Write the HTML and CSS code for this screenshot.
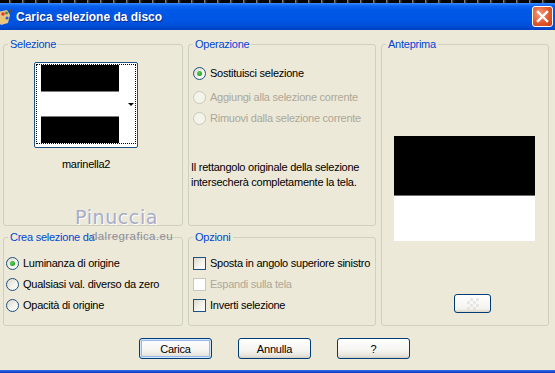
FILE: index.html
```html
<!DOCTYPE html>
<html lang="it">
<head>
    <meta charset="UTF-8">
    <meta name="viewport" content="width=device-width, initial-scale=1.0">
    <title>Carica selezione da disco</title>
    <link rel="stylesheet" href="styles.css">
</head>
<body>
    <div class="window">
        <div class="screen-strip"></div>
        <div class="titlebar">
            <svg class="app-icon" width="12" height="17" viewBox="0 0 12 17">
                <path d="M-2 3 L7 1 L10 6 L8 14 L1 16 L-2 12 Z" fill="#e9c38a"/>
                <circle cx="3" cy="5" r="1.8" fill="#e23a2a"/>
                <circle cx="6.5" cy="4" r="1.5" fill="#2f9c3a"/>
                <circle cx="7" cy="9" r="1.6" fill="#2a5fd8"/>
                <circle cx="3" cy="11" r="1.6" fill="#f2d22a"/>
                <path d="M9 2 L11 0 L12 1 L10 4 Z" fill="#7a4a1c"/>
            </svg>
            <span class="title">Carica selezione da disco</span>
            <span class="close-btn">
                <svg width="13" height="13" viewBox="0 0 13 13">
                    <path d="M2 2 L11 11 M11 2 L2 11" stroke="#fff" stroke-width="2.4" stroke-linecap="square"/>
                </svg>
            </span>
        </div>

        <div class="groups">
            <fieldset class="group group-selection">
                <legend>Selezione</legend>
                <div class="thumb-wrap">
                    <div class="thumb">
                        <div class="thumb-focus">
                            <div class="thumb-img">
                                <div class="bar-black bar-top"></div>
                                <div class="bar-white"></div>
                                <div class="bar-black bar-bottom"></div>
                            </div>
                            <div class="thumb-side"><span class="arrow"></span></div>
                        </div>
                    </div>
                    <div class="thumb-name">marinella2</div>
                </div>
            </fieldset>

            <fieldset class="group group-operation">
                <legend>Operazione</legend>
                <div class="option-list operation-list">
                    <label class="option"><span class="radio checked"></span>Sostituisci selezione</label>
                    <label class="option disabled"><span class="radio"></span>Aggiungi alla selezione corrente</label>
                    <label class="option disabled"><span class="radio"></span>Rimuovi dalla selezione corrente</label>
                </div>
                <p class="note">Il rettangolo originale della selezione<br>intersecherà completamente la tela.</p>
            </fieldset>

            <fieldset class="group group-preview">
                <legend>Anteprima</legend>
                <div class="preview-img">
                    <div class="preview-black"></div>
                    <div class="preview-white"></div>
                </div>
                <span class="bg-btn"><span class="checker"></span></span>
            </fieldset>

            <fieldset class="group group-source">
                <legend>Crea selezione da</legend>
                <div class="option-list">
                    <label class="option"><span class="radio checked"></span>Luminanza di origine</label>
                    <label class="option"><span class="radio"></span>Qualsiasi val. diverso da zero</label>
                    <label class="option"><span class="radio"></span>Opacità di origine</label>
                </div>
            </fieldset>

            <fieldset class="group group-options">
                <legend>Opzioni</legend>
                <div class="option-list">
                    <label class="option"><span class="check"></span>Sposta in angolo superiore sinistro</label>
                    <label class="option disabled"><span class="check"></span>Espandi sulla tela</label>
                    <label class="option"><span class="check"></span>Inverti selezione</label>
                </div>
            </fieldset>
        </div>

        <div class="buttons">
            <button type="button" class="btn btn-default">Carica</button>
            <button type="button" class="btn">Annulla</button>
            <button type="button" class="btn">?</button>
        </div>

        <div class="bottom-strip"></div>

        <div class="watermark">Pinuccia</div>
        <div class="watermark-url">dalregrafica.eu</div>
    </div>
</body>
</html>
```

FILE: styles.css
```css
body {
    margin: 0;
    font-family: 'Liberation Sans', Arial, sans-serif;
    font-size: 11px;
    letter-spacing: -0.25px;
    color: #000;
    background-color: #ece9d8;
}

.window {
    position: relative;
    width: 555px;
    height: 373px;
    overflow: hidden;
    display: flex;
    flex-direction: column;
    background-color: #ece9d8;
}

.screen-strip {
    height: 3px;
    background: repeating-linear-gradient(90deg, #050505 0, #050505 9px, #9a9a9a 9px, #202020 11px, #050505 13px);
}

.titlebar {
    height: 27px;
    display: flex;
    align-items: center;
    position: relative;
    background: linear-gradient(#3d8dff 0, #0a62ee 3px, #0058e6 7px, #0055e3 18px, #004cd6 24px, #0041c0 27px);
}

.app-icon {
    margin-left: 0;
    margin-top: 2px;
}

.title {
    margin-left: 4px;
    color: #fff;
    font-family: 'Liberation Sans', Arial, sans-serif;
    font-weight: bold;
    font-size: 12px;
    letter-spacing: 0;
    text-shadow: 1px 1px 0 #0a2a8a;
}

.close-btn {
    position: absolute;
    right: 2px;
    top: 3px;
    width: 19px;
    height: 19px;
    border: 1px solid #fff;
    border-radius: 3px;
    display: flex;
    align-items: center;
    justify-content: center;
    background: radial-gradient(circle at 35% 35%, #f39a78 0, #e2582e 55%, #c53c12 100%);
}

.groups {
    display: grid;
    grid-template-columns: 180px 188px 168px;
    grid-template-rows: 188px 95px;
    column-gap: 5px;
    row-gap: 5px;
    padding: 8px 0 0 3px;
}

.group {
    margin: 0;
    padding: 0;
    border: 1px solid #d0d0bf;
    border-radius: 3px;
    min-width: 0;
    display: flex;
    flex-direction: column;
}

.group legend {
    margin-left: 4px;
    padding: 0 2px;
    line-height: 13px;
    color: #0046d5;
}

.group-preview {
    grid-column: 3;
    grid-row: 1 / span 2;
    align-items: flex-start;
}

.group-source {
    grid-column: 1;
    grid-row: 2;
}

.group-options {
    grid-column: 2;
    grid-row: 2;
}

/* thumbnail of the saved selection */
.thumb-wrap {
    width: 102px;
    margin: 11px 0 0 31px;
    display: flex;
    flex-direction: column;
    align-items: center;
}

.thumb {
    width: 100px;
    height: 82px;
    border: 1px solid #1c5180;
    border-radius: 2px;
    padding: 1px;
    box-sizing: content-box;
    background: #fff;
}

.thumb-focus {
    box-sizing: border-box;
    height: 80px;
    border: 1px dotted #000;
    display: flex;
    background: #fff;
}

.thumb-img {
    width: 78px;
    margin-left: 4px;
    display: flex;
    flex-direction: column;
}

.bar-black {
    height: 26px;
    background: #000;
}

.bar-top {
    border-bottom: 1px solid #7a7a7a;
}

.bar-bottom {
    border-top: 1px solid #7a7a7a;
}

.bar-white {
    height: 24px;
    background: #fff;
}

.thumb-side {
    flex: 1;
    display: flex;
    align-items: center;
    justify-content: flex-end;
    padding-right: 1px;
}

.arrow {
    width: 0;
    height: 0;
    border-left: 3px solid transparent;
    border-right: 3px solid transparent;
    border-top: 3px solid #000;
}

.thumb-name {
    margin-top: 10px;
    line-height: 13px;
}

/* radio and check rows */
.option-list {
    display: flex;
    flex-direction: column;
    gap: 8px;
    margin-top: 13px;
    padding-left: 2px;
}

.group-options .option-list {
    padding-left: 4px;
}

.operation-list {
    margin-top: 16px;
    padding-left: 4px;
}

.operation-list .option:first-child {
    margin-bottom: 3px;
}

.option {
    display: flex;
    align-items: center;
    gap: 4px;
    height: 13px;
    line-height: 13px;
    white-space: nowrap;
}

.option.disabled {
    color: #aca899;
}

.radio {
    box-sizing: border-box;
    width: 13px;
    height: 13px;
    border: 1px solid #1c5180;
    border-radius: 50%;
    background: linear-gradient(135deg, #dcd9cb 0, #f3f2ec 55%, #fff 100%);
    display: flex;
    align-items: center;
    justify-content: center;
}

.radio.checked::after {
    content: "";
    width: 5px;
    height: 5px;
    border-radius: 50%;
    background: radial-gradient(circle at 40% 40%, #5ed35e, #21a121 70%);
}

.option.disabled .radio {
    border-color: #cac8bb;
    background: #f5f4ea;
}

.check {
    box-sizing: border-box;
    width: 13px;
    height: 13px;
    border: 1px solid #1c5180;
    background: linear-gradient(135deg, #dcd9cb 0, #f3f2ec 55%, #fff 100%);
}

.option.disabled .check {
    border-color: #cac8bb;
    background: #fff;
}

.note {
    margin: 35px 0 0 2px;
    line-height: 15px;
}

/* preview */
.preview-img {
    width: 141px;
    margin: 85px 0 0 12px;
}

.preview-black {
    height: 59px;
    background: #000;
    border-bottom: 1px solid #6e6e6e;
}

.preview-white {
    height: 45px;
    background: #fff;
}

.bg-btn {
    box-sizing: border-box;
    width: 37px;
    height: 19px;
    margin: 53px 0 0 72px;
    border: 1px solid #003c74;
    border-radius: 3px;
    background: linear-gradient(#fff, #f4f3ee 80%, #dcd8cc);
    display: flex;
    align-items: center;
    justify-content: center;
}

.checker {
    width: 12px;
    height: 12px;
    opacity: 0.5;
    background:
        linear-gradient(45deg, #d8d8d8 25%, transparent 25%, transparent 75%, #d8d8d8 75%),
        linear-gradient(45deg, #d8d8d8 25%, transparent 25%, transparent 75%, #d8d8d8 75%);
    background-size: 6px 6px;
    background-position: 0 0, 3px 3px;
}

/* bottom buttons */
.buttons {
    display: flex;
    gap: 26px;
    margin-top: 12px;
    padding-left: 139px;
}

.btn {
    box-sizing: border-box;
    width: 73px;
    height: 21px;
    padding: 0;
    border: 1px solid #003c74;
    border-radius: 3px;
    background: linear-gradient(#fff 0, #f5f4f0 60%, #e8e6de 85%, #d6d0c5 100%);
    font-family: 'Liberation Sans', Arial, sans-serif;
    font-size: 11px;
    letter-spacing: -0.2px;
    color: #000;
}

.btn-default {
    box-shadow: inset 0 0 0 1px #cee7ff, inset 0 0 0 2px #98b8ea;
}

.bottom-strip {
    margin-top: auto;
    height: 3px;
    background: linear-gradient(#3b6ce0, #0835c8);
}

/* watermark over the dialog */
.watermark {
    position: absolute;
    left: 75px;
    top: 206px;
    font-family: 'DejaVu Sans', sans-serif;
    font-size: 19px;
    letter-spacing: 0.6px;
    color: #a7adc9;
    text-shadow: 1px 1px 0 #fff;
}

.watermark-url {
    position: absolute;
    left: 91px;
    top: 230px;
    font-size: 11.5px;
    letter-spacing: 0.4px;
    color: #8e8d9b;
}
```
